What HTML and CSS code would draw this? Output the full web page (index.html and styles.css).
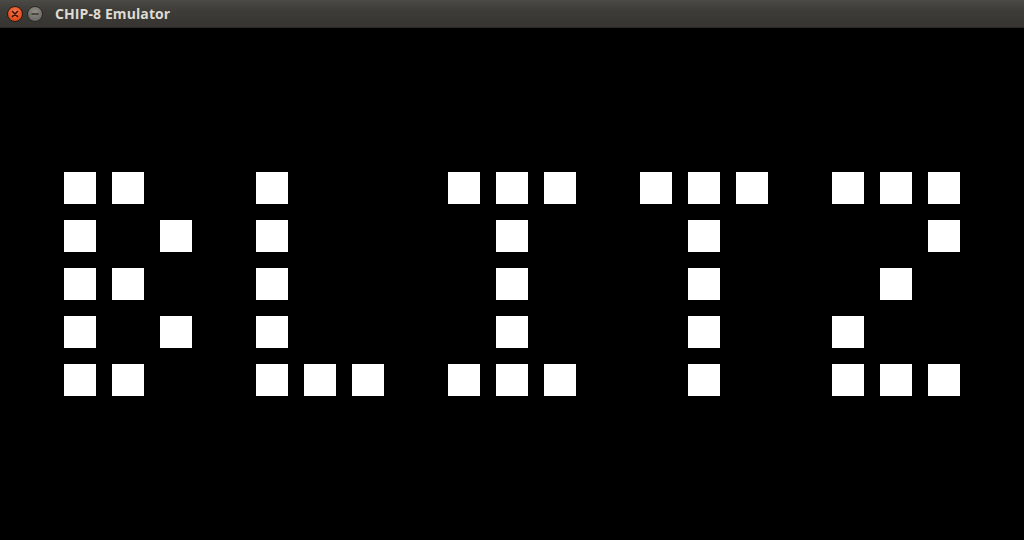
FILE: index.html
```html
<!DOCTYPE html>
<html>
<head>
<meta charset="utf-8">
<title>CHIP-8 Emulator</title>
<link rel="stylesheet" href="styles.css">
</head>
<body>
<div class="window">
  <header class="titlebar">
    <span class="btn close"><svg width="14" height="14" viewBox="0 0 14 14"><path d="M4.5 4.5 L9.5 9.5 M9.5 4.5 L4.5 9.5" stroke="#3a1208" stroke-width="1.6" stroke-linecap="round"/></svg></span>
    <span class="btn min"><svg width="14" height="14" viewBox="0 0 14 14"><path d="M4 7 H10" stroke="#333330" stroke-width="1.6" stroke-linecap="round"/></svg></span>
    <span class="title">CHIP-8 Emulator</span>
  </header>
  <main class="screen">
    <div class="grid">
      <i class="p on"></i><i class="p on"></i><i class="p"></i><i class="p"></i><i class="p on"></i><i class="p"></i><i class="p"></i><i class="p"></i><i class="p on"></i><i class="p on"></i><i class="p on"></i><i class="p"></i><i class="p on"></i><i class="p on"></i><i class="p on"></i><i class="p"></i><i class="p on"></i><i class="p on"></i><i class="p on"></i>
      <i class="p on"></i><i class="p"></i><i class="p on"></i><i class="p"></i><i class="p on"></i><i class="p"></i><i class="p"></i><i class="p"></i><i class="p"></i><i class="p on"></i><i class="p"></i><i class="p"></i><i class="p"></i><i class="p on"></i><i class="p"></i><i class="p"></i><i class="p"></i><i class="p"></i><i class="p on"></i>
      <i class="p on"></i><i class="p on"></i><i class="p"></i><i class="p"></i><i class="p on"></i><i class="p"></i><i class="p"></i><i class="p"></i><i class="p"></i><i class="p on"></i><i class="p"></i><i class="p"></i><i class="p"></i><i class="p on"></i><i class="p"></i><i class="p"></i><i class="p"></i><i class="p on"></i><i class="p"></i>
      <i class="p on"></i><i class="p"></i><i class="p on"></i><i class="p"></i><i class="p on"></i><i class="p"></i><i class="p"></i><i class="p"></i><i class="p"></i><i class="p on"></i><i class="p"></i><i class="p"></i><i class="p"></i><i class="p on"></i><i class="p"></i><i class="p"></i><i class="p on"></i><i class="p"></i><i class="p"></i>
      <i class="p on"></i><i class="p on"></i><i class="p"></i><i class="p"></i><i class="p on"></i><i class="p on"></i><i class="p on"></i><i class="p"></i><i class="p on"></i><i class="p on"></i><i class="p on"></i><i class="p"></i><i class="p"></i><i class="p on"></i><i class="p"></i><i class="p"></i><i class="p on"></i><i class="p on"></i><i class="p on"></i>
    </div>
  </main>
</div>
</body>
</html>
```
FILE: styles.css
```css
html, body {
  margin: 0;
  padding: 0;
  background: #000;
}
.window {
  width: 1024px;
  height: 540px;
  display: flex;
  flex-direction: column;
  overflow: hidden;
}
.titlebar {
  height: 28px;
  flex: none;
  display: flex;
  align-items: center;
  padding-left: 7px;
  box-sizing: border-box;
  background: linear-gradient(#4b4a45 0%, #3d3c38 40%, #353430 100%);
  border-bottom: 1px solid #2a2926;
  font-family: "Open Sans", "DejaVu Sans", sans-serif;
  font-weight: 700;
  font-size: 14px;
  color: #dfdbd2;
}
.btn {
  width: 16px;
  height: 16px;
  border-radius: 50%;
  display: flex;
  align-items: center;
  justify-content: center;
  box-sizing: border-box;
  margin-right: 4px;
}
.btn svg { display: block; }
.close {
  background: radial-gradient(circle at 50% 35%, #f57a4d 0%, #e3501f 60%, #c5421a 100%);
  border: 1px solid #2c1a12;
}
.min {
  background: radial-gradient(circle at 50% 35%, #8f8d86 0%, #6e6c66 70%, #5d5b56 100%);
  border: 1px solid #2b2a27;
}
.title {
  margin-left: 8px;
  letter-spacing: 0.1px;
}
.screen {
  flex: 1;
  background: #000;
  padding: 144px 0 0 64px;
}
.grid {
  display: grid;
  grid-template-columns: repeat(19, 32px);
  grid-auto-rows: 32px;
  gap: 16px;
}
.p { display: block; }
.p.on { background: #fff; }
```
